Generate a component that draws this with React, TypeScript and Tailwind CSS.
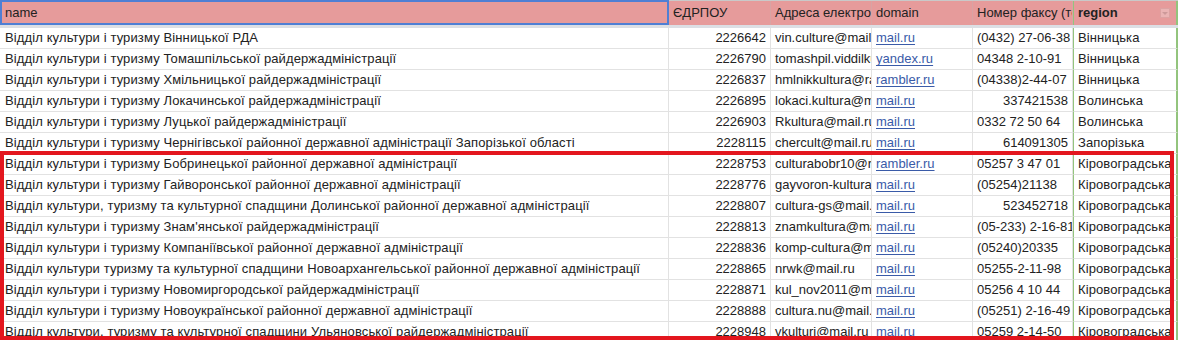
const cols = "grid grid-cols-[669px_102px_101px_101px_100px_105px]";

type Row = {
  name: string;
  code: string;
  email: string;
  domain: string;
  fax: string;
  faxRight?: boolean;
  region: string;
};

const rows: Row[] = [
  { name: "Відділ культури і туризму Вінницької РДА", code: "2226642", email: "vin.culture@mail.ru", domain: "mail.ru", fax: "(0432) 27-06-38", region: "Вінницька" },
  { name: "Відділ культури і туризму Томашпільської райдержадміністрації", code: "2226790", email: "tomashpil.viddilkultury@yandex.ru", domain: "yandex.ru", fax: "04348 2-10-91", region: "Вінницька" },
  { name: "Відділ культури і туризму Хмільницької райдержадміністрації", code: "2226837", email: "hmlnikkultura@rambler.ru", domain: "rambler.ru", fax: "(04338)2-44-07", region: "Вінницька" },
  { name: "Відділ культури і туризму Локачинської райдержадміністрації", code: "2226895", email: "lokaci.kultura@mail.ru", domain: "mail.ru", fax: "337421538", faxRight: true, region: "Волинська" },
  { name: "Відділ культури і туризму Луцької райдержадміністрації", code: "2226903", email: "Rkultura@mail.ru", domain: "mail.ru", fax: "0332 72 50 64", region: "Волинська" },
  { name: "Відділ культури і туризму Чернігівської районної державної адміністрації Запорізької області", code: "2228115", email: "chercult@mail.ru", domain: "mail.ru", fax: "614091305", faxRight: true, region: "Запорізька" },
  { name: "Відділ культури і туризму Бобринецької районної державної адміністрації", code: "2228753", email: "culturabobr10@rambler.ru", domain: "rambler.ru", fax: "05257 3 47 01", region: "Кіровоградська" },
  { name: "Відділ культури і туризму Гайворонської районної державної адміністрації", code: "2228776", email: "gayvoron-kultura@mail.ru", domain: "mail.ru", fax: "(05254)21138", region: "Кіровоградська" },
  { name: "Відділ культури, туризму та культурної спадщини Долинської районної державної адміністрації", code: "2228807", email: "cultura-gs@mail.ru", domain: "mail.ru", fax: "523452718", faxRight: true, region: "Кіровоградська" },
  { name: "Відділ культури і туризму Знам'янської райдержадміністрації", code: "2228813", email: "znamkultura@mail.ru", domain: "mail.ru", fax: "(05-233) 2-16-81", region: "Кіровоградська" },
  { name: "Відділ культури і туризму Компаніївської районної державної адміністрації", code: "2228836", email: "komp-cultura@mail.ru", domain: "mail.ru", fax: "(05240)20335", region: "Кіровоградська" },
  { name: "Відділ культури туризму та культурної спадщини Новоархангельської районної державної адміністрації", code: "2228865", email: "nrwk@mail.ru", domain: "mail.ru", fax: "05255-2-11-98", region: "Кіровоградська" },
  { name: "Відділ культури і туризму Новомиргородської райдержадміністрації", code: "2228871", email: "kul_nov2011@mail.ru", domain: "mail.ru", fax: "05256 4 10 44", region: "Кіровоградська" },
  { name: "Відділ культури і туризму Новоукраїнської районної державної адміністрації", code: "2228888", email: "cultura.nu@mail.ru", domain: "mail.ru", fax: "(05251) 2-16-49", region: "Кіровоградська" },
  { name: "Відділ культури, туризму та культурної спадщини Ульяновської райдержадміністрації", code: "2228948", email: "vkulturi@mail.ru", domain: "mail.ru", fax: "05259 2-14-50", region: "Кіровоградська" },
];

const cell = "h-[21px] flex items-center px-[4px] overflow-hidden whitespace-nowrap border-b border-r border-[#e2e2e2]";
const head = "h-[24px] flex items-center px-[4px] overflow-hidden whitespace-nowrap border-r border-[#d9a3a3]";

export default function App() {
  return (
    <div className="relative h-[340px] w-[1178px] overflow-hidden bg-white text-[13px] text-[#222] font-['Liberation_Sans',Arial,sans-serif]">
      {/* header */}
      <div className={`${cols} bg-[#e69b9b] border-t border-[#c9c9c9]`}>
        <div className="-mt-px h-[25px] flex items-center pl-[5px] shadow-[inset_0_0_0_2px_#4f7fd4]">name</div>
        <div className={head}>ЄДРПОУ</div>
        <div className={head}>Адреса електронної пошти</div>
        <div className={head}>domain</div>
        <div className={head}>Номер факсу (телефону)</div>
        <div className="h-[24px] relative flex items-center pl-[4px] border-l border-r-2 border-[#93c47d] font-bold">
          region
          <span className="absolute right-[6px] top-[7px] w-[10px] h-[10px] bg-[#eab4b4] border border-[#dca2a2] flex items-center justify-center">
            <span className="w-0 h-0 border-l-[3px] border-r-[3px] border-t-[3px] border-l-transparent border-r-transparent border-t-[#c99]" />
          </span>
        </div>
      </div>
      <div className="h-[3px] bg-[#dcdfe4]" />

      {rows.map((r) => (
        <div key={r.code} className={cols}>
          <div className={`${cell} pl-[5px] tracking-[0.12px]`}>{r.name}</div>
          <div className={`${cell} justify-end`}>{r.code}</div>
          <div className={cell}>{r.email}</div>
          <div className={cell}>
            <span className="text-[#3a5ba8] underline underline-offset-2">{r.domain}</span>
          </div>
          <div className={`${cell} ${r.faxRight ? "justify-end" : ""}`}>{r.fax}</div>
          <div className="h-[21px] flex items-center px-[4px] overflow-hidden whitespace-nowrap border-b border-[#e2e2e2] border-l border-l-[#93c47d] border-r-2 border-r-[#93c47d] tracking-[0.1px]">
            {r.region}
          </div>
        </div>
      ))}

      {/* annotation box */}
      <div className="absolute left-0 top-[151px] w-[1174px] h-[189px] border-4 border-[#e3161e]" />
    </div>
  );
}
